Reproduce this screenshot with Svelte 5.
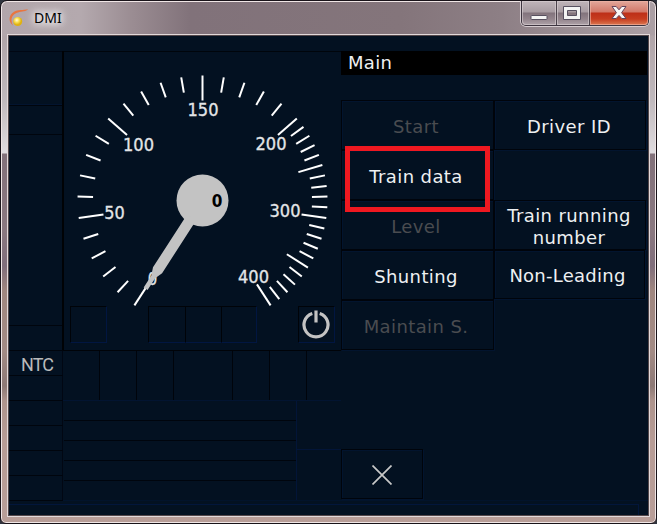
<script>
  const CX = 138.5;
  const CY = 149.5;
  const toAngle = (v) => (v <= 200 ? -147 + v * 0.98 : 49 + (v - 200) * 0.49);
  const point = (r, deg) => {
    const a = (deg * Math.PI) / 180;
    return [CX + r * Math.sin(a), CY - r * Math.cos(a)];
  };
  const ticks = Array.from({ length: 41 }, (_, i) => {
    const a = toAngle(i * 10);
    const [x1, y1] = point(125, a);
    const [x2, y2] = point(i % 5 === 0 ? 100 : 109.5, a);
    return { x1, y1, x2, y2 };
  });
  const labels = [
    { t: '0', x: 88.5, y: 233.5, w: 9.5 },
    { t: '50', x: 50.5, y: 167.5, w: 20.5 },
    { t: '100', x: 74.5, y: 100, w: 31 },
    { t: '150', x: 139, y: 65, w: 31 },
    { t: '200', x: 207, y: 99, w: 31 },
    { t: '300', x: 221, y: 165.5, w: 31 },
    { t: '400', x: 189.5, y: 231.5, w: 31 }
  ];
  const leftButtons = [
    { label: 'Start', off: true },
    { label: 'Train data' },
    { label: 'Level', off: true },
    { label: 'Shunting' },
    { label: 'Maintain S.', off: true }
  ];
  const sideRows = [54, 29, 191, 25, 25, 25, 25, 25, 25, 25];
  const statusCols = [37, 37, 37, 59, 37, 37, 34];
</script>

<div class="window">
  <header>
    <svg class="logo" width="22" height="20" viewBox="0 0 22 20">
      <defs>
        <radialGradient id="ball" cx=".4" cy=".35"><stop offset="0" stop-color="#fffbe0" /><stop offset=".5" stop-color="#fae052" /><stop offset="1" stop-color="#dfb110" /></radialGradient>
      </defs>
      <path d="M4 16.5C-1 13 -.5 6 5 2.8C9 .6 14 1.4 19 .3C17.5 2.6 13 2.4 9 3.4C2.5 5.2 1 11 4 16.5Z" fill="#e87540" />
      <circle cx="8.7" cy="12.5" r="4.5" fill="url(#ball)" />
    </svg>
    <span class="name">DMI</span>
    <div class="controls">
      <button aria-label="Minimize">
        <svg width="18" height="16"><rect x="1" y="10.5" width="16" height="4" rx=".7" fill="#f4f4f4" stroke="#575060" /></svg>
      </button>
      <button aria-label="Maximize">
        <svg width="18" height="16"><path fill-rule="evenodd" d="M.5 1.5H17.5V14.5H.5ZM4.5 5.5V10.5H13.5V5.5Z" fill="#f4f4f4" stroke="#575060" /></svg>
      </button>
      <button class="close" aria-label="Close">
        <svg width="18" height="16"><path d="M2 1.5H6.2L9 4.8 11.8 1.5H16L11.6 7.7 16 13.5H11.8L9 10.4 6.2 13.5H2L6.4 7.7Z" fill="#f8f6f6" stroke="#64435a" /></svg>
      </button>
    </div>
  </header>

  <main>
    <div class="body">
      <aside>
        {#each sideRows as h, i}
          <div class="side" style="height:{h}px">{i === 4 ? 'NTC' : ''}</div>
        {/each}
      </aside>

      <section class="center">
        <div class="dialbox">
          <svg class="dial" width="277" height="299" viewBox="0 0 277 299">
            {#each ticks as t}
              <line x1={t.x1} y1={t.y1} x2={t.x2} y2={t.y2} stroke="#fff" stroke-width="2" />
            {/each}
            {#each labels as l}
              <text x={l.x} y={l.y} textLength={l.w} lengthAdjust="spacingAndGlyphs" text-anchor="middle">{l.t}</text>
            {/each}
            <g fill="#c3c3c3">
              <circle cx={CX} cy={CY} r="26" />
              <path transform="translate({CX} {CY}) rotate(32.8)" d="M-5.4 20H5.4V83L2.3 91V105H-2.3V91L-5.4 83Z" />
              <text class="speed" x="153" y="155.5" text-anchor="middle">0</text>
            </g>
          </svg>
          <div class="symbols">
            <i class="cell first"></i>
            <i class="cell"></i><i class="cell mid"></i><i class="cell last"></i>
            <i class="cell power">
              <svg width="30" height="30" viewBox="0 0 30 30" fill="none" stroke="#c3c3c3">
                <path d="M11.3 3.4A12 12 0 1 0 18.7 3.4" stroke-width="3.2" />
                <path d="M15 .5V12.5" stroke-width="3.2" />
              </svg>
            </i>
          </div>
        </div>
        <div class="status">
          {#each statusCols as w}<i style="width:{w}px"></i>{/each}
        </div>
        <div class="lower">
          <div class="messages"><i></i><i></i><i></i><i></i><i></i></div>
          <div class="scroll"><i></i><i></i></div>
        </div>
      </section>

      <section class="menu">
        <h1>Main</h1>
        <div class="buttons">
          <div class="col">
            {#each leftButtons as b}
              <div class="btn" class:off={b.off} class:marked={b.label === 'Train data'}><span>{b.label}</span></div>
            {/each}
          </div>
          <div class="col second">
            <div class="btn"><span>Driver ID</span></div>
            <div class="blank"></div>
            <div class="btn"><span>Train running<br />number</span></div>
            <div class="btn lead"><span>Non-Leading</span></div>
          </div>
        </div>
        <div class="btn exit">
          <svg width="20" height="20" viewBox="0 0 20 20"><path d="M.5 .5L19.5 19.5M19.5 .5L.5 19.5" stroke="#c8c8c8" stroke-width="1.7" /></svg>
        </div>
      </section>
    </div>
    <footer></footer>
  </main>
</div>

<style>
  :global(body) { margin: 0; background: #30343e; }
  * { box-sizing: border-box; }
  .window {
    width: 657px; height: 524px; padding: 0 7px 6px 6px;
    border: 1px solid #191319; border-radius: 7px 7px 6px 6px;
    box-shadow: inset 0 0 0 1px #f0e6e6;
    background: linear-gradient(#b3a7ac00 0 34px, #b0a4a8 35px, #c0b9bd 100px, #e0dcdf 152px, #82717a 153px, #8a7880 230px, #806e7b 265px, #a08780 290px, #a38b85 350px, #8d7976 385px, #ae948d 400px, #b79c96 440px, #b89e98 100%),
      linear-gradient(90deg, #b2a6ab 0, #b4a9ae 80px, #9b8d93 130px, #81727a 190px, #84757b 400px, #8d7f85 500px, #aca0a5 100%);
    font-family: "DejaVu Sans", Verdana, sans-serif;
  }
  header { height: 33px; display: flex; align-items: flex-start; }
  .logo { margin: 8px 0 0 2px; }
  .name {
    margin: 7px 0 0 3px; font: 14px/20px "Noto Sans", "Open Sans", sans-serif; color: #000;
    text-shadow: 0 0 7px #fff, 0 0 10px #fff, 0 0 12px #fff;
  }
  .controls {
    display: flex; margin-left: auto; height: 25px; width: 128px;
    border: 1px solid #3e3540; border-top: 0; border-radius: 0 0 5px 5px;
    box-shadow: 0 1px 0 #d7cdd1, 1px 0 0 #d7cdd1, -1px 0 0 #d7cdd1;
  }
  button {
    width: 35px; padding: 4px 0 0; border: 0; border-right: 1px solid #4c424b; border-radius: 0 0 0 4px; flex: none;
    background: linear-gradient(#c0b5ba 0, #a89ca2 11px, #82737c 12px, #93848c 18px, #aea2a8 100%);
    box-shadow: inset 0 0 0 1px #d8cfd3a0; display: flex; justify-content: center; align-items: flex-start;
  }
  button:nth-child(2) { width: 33px; border-radius: 0; padding-right: 3px; }
  button.close {
    width: 58px; border-right: 0; border-radius: 0 0 4px 0;
    background: linear-gradient(#e3a79b 0, #d27868 11px, #bd2f18 12px, #c63d20 18px, #dc7851 100%);
    box-shadow: inset 0 0 0 1px #efb6a6a0;
  }
  main {
    width: 643px; height: 483px; border: 1px solid #e2d9da;
    box-shadow: inset 0 0 0 1px #54484b; background: #031121; padding: 16px 1px 1px;
  }
  .body { display: flex; height: 449px; }
  aside { width: 55px; border-top: 1px solid #010713; flex: none; }
  .side {
    border-bottom: 1px solid #00050d; border-right: 1px solid #010713; width: 54px;
    font: 18px/27px Roboto, sans-serif; color: #b9babb; padding-left: 12px; letter-spacing: -.9px;
  }
  .side:first-child { box-shadow: inset 0 -1px #02142f; }
  .side:nth-child(-n+4) { border-right: 0; }
  .center { width: 277px; flex: none; }
  .dialbox { height: 299px; border-top: 1px solid #00050b; position: relative; box-shadow: -2px 0 #000205; }
  .dial { display: block; margin-top: -1px; }
  text { font: 18px "DejaVu Sans Condensed", "DejaVu Sans", sans-serif; fill: #e3e5e7; stroke: #e3e5e7; stroke-width: .3px; }
  .speed { font: bold 17px "DejaVu Sans Condensed", sans-serif; fill: #000; stroke: none; }
  .symbols { position: absolute; left: 6px; top: 254px; display: flex; }
  .cell {
    width: 37px; height: 37px; border: 1px solid #011641; border-top-color: #000308; border-left-color: #000308;
    display: flex; align-items: center; justify-content: center; flex: none;
  }
  .cell svg { margin-right: 1px; flex: none; }
  .first { margin-right: 41px; }
  .cell:nth-child(2), .mid { border-right: 0; }
  .mid, .last { width: 36px; }
  .power { margin-left: 41px; }
  .status { display: flex; height: 51px; border-top: 1px solid #000308; border-bottom: 1px solid #021431; margin-left: -1px; }
  .status i { height: 49px; border-right: 1px solid #00040b; flex: none; }
  .status i:last-child { border: 0; }
  .lower { display: flex; height: 99px; }
  .messages { width: 233px; border-right: 1px solid #021538; flex: none; }
  .messages i { display: block; height: 20px; border-bottom: 1px solid #00050d; }
  .messages i:last-child { border: 0; height: 19px; }
  .scroll i { display: block; width: 44px; height: 49px; border-bottom: 1px solid #021538; }
  .scroll i:last-child { border: 0; }
  .menu { width: 306px; flex: none; }
  h1 {
    margin: 0; height: 24px; background: #000; color: #eef0f2; padding-left: 7px;
    font-size: 18px; line-height: 23px; font-weight: 400; letter-spacing: .3px;
  }
  .buttons { display: flex; margin-top: 25px; height: 349px; }
  .col { width: 153px; flex: none; }
  .btn {
    height: 50px; display: flex; align-items: center; justify-content: center; text-align: center;
    color: #eef0f2; font-size: 18px; line-height: 22px; letter-spacing: .4px; position: relative;
    border: 1px solid #00040b; box-shadow: inset 1px 1px #02142e, 1px 1px #02142e;
  }
  .btn span { padding: 4px 3px 0 0; }
  .off { color: #4a4c50; }
  .marked::after {
    content: ""; box-sizing: border-box; position: absolute; z-index: 2; left: 3px; top: -5px; width: 145px; height: 66px; border: 5px solid #ef1820;
  }
  .second .btn { width: 152px; }
  .second .btn span { padding: 3px 2px 0 0; }
  .blank { height: 50px; }
  .second .btn.lead { width: 151px; height: 49px; }
  .second .btn.lead span { padding: 2px 4px 0 0; letter-spacing: .25px; }
  .exit { width: 82px; }
  .exit svg { margin-top: 2px; }
  footer { height: 15px; border-top: 1px solid #02132b; }
  footer::after { content: ""; display: block; box-sizing: border-box; width: 630px; margin-top: 3px; height: 11px; border: 1px solid #02163b; border-width: 1px 1px 0 0; }
</style>
